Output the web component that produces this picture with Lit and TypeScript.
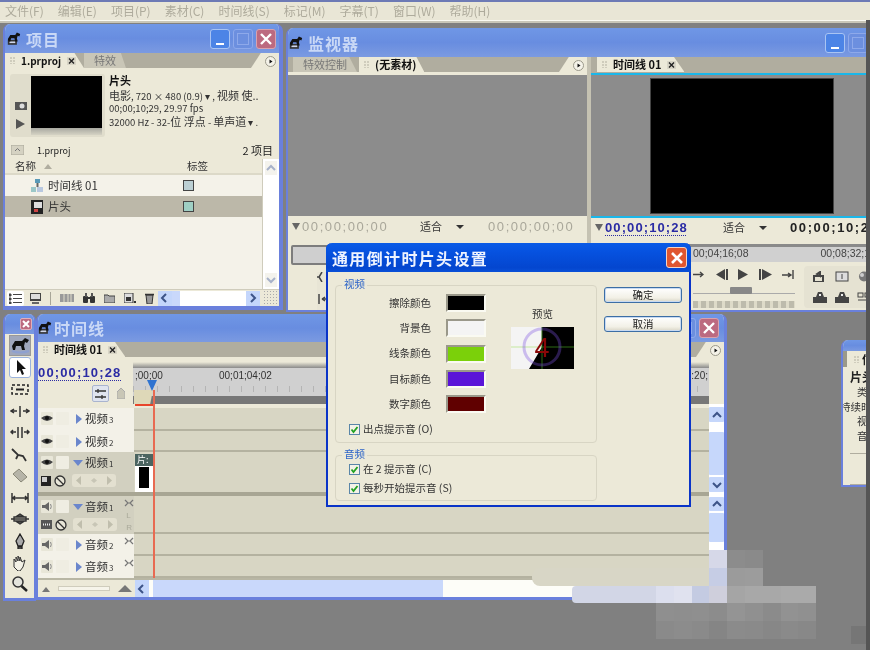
import { LitElement, html, css, svg } from "lit";
import { customElement } from "lit/decorators.js";

const ic = (w: number, h: number, body: unknown) =>
  html`<svg class="ic" width=${w} height=${h} viewBox="0 0 ${w} ${h}">${body}</svg>`;

const horse = () =>
  html`<svg class="ic" width="14" height="14" viewBox="0 0 17 16"><rect x="1" y="9" width="11" height="6" fill="#333"/><rect x="3" y="11" width="7" height="2" fill="#cfd6ea"/>
  <path d="M1 8 L4 3 L10 3 L12 0 L16 2 L15 5 L13 4 L12 7 L13 11 L10 11 L9 7 L5 7 L4 11 L2 11 Z" fill="#111"/></svg>`;

const gridIcon = () => ic(5, 7, svg`<path d="M0 0h2v2H0zM3 0h2v2H3zM0 3h2v2H0zM3 3h2v2H3zM0 6h2v1H0zM3 6h2v1H3z" fill="#cfccbc"/>`);
const tabClose = () => ic(9, 8, svg`<rect width="9" height="8" fill="#d8d5c6"/><path d="M2 1.500 7 6.500M7 1.500 2 6.500" stroke="#222" stroke-width="1.400"/>`);
const menuBtn = () => ic(11, 11, svg`<circle cx="5.500" cy="5.500" r="5" fill="#f4f2e8" stroke="#9a988a"/><path d="M4.500 3.400 7.500 5.500 4.500 7.600Z" fill="#111"/>`);
const chevron = (d: string) => {
  const p: Record<string, string> = { l: "M7 2 3 6 7 10", r: "M4 2 8 6 4 10", u: "M2 8 6 4 10 8", d: "M2 4 6 8 10 4" };
  return ic(12, 12, svg`<path d=${p[d]} fill="none" stroke="#3d5488" stroke-width="2"/>`);
};
const eye = () => ic(12, 8, svg`<path d="M0 3Q6 -2 12 3Q6 9 0 3Z" fill="#444"/><circle cx="6" cy="3" r="2" fill="#111"/>`);
const speaker = () => ic(11, 11, svg`<path d="M0 4h3l4-3v9L3 7H0Z" fill="#666"/><path d="M8.500 3Q10 5.500 8.500 8" fill="none" stroke="#888"/>`);
const sync = () => ic(10, 8, svg`<path d="M1 1 4 4 1 7M9 1 6 4 9 7M4 4h2" fill="none" stroke="#777" stroke-width="1.200"/>`);
const noSign = () => ic(12, 12, svg`<circle cx="6" cy="6" r="5" fill="#e8e6d8" stroke="#333" stroke-width="1.300"/><path d="M2.500 2.500 9.500 9.500" stroke="#333" stroke-width="1.300"/>`);
const kfNav = () => html`<span class="kf">${ic(40, 11, svg`<path d="M7 1 2 5.500 7 10Z" fill="#c0bead"/><path d="M20 3 23 5.500 20 8 17 5.500Z" fill="#c8c6b6"/><path d="M33 1 38 5.500 33 10Z" fill="#c0bead"/>`)}</span>`;

const tools = [
  svg`<path d="M2 8 5 3h7l3-3 4 2-2 3-2-1-1 4 1 4h-3l-1-4H6l-1 4H3Z" fill="#111"/><path d="M2 13q8 3 17 0" stroke="#8ea0d0" stroke-width="2" fill="none"/>`,
  svg`<path d="M7 1v13l3-3 2 5 2-1-2-5h4Z" fill="#111"/>`,
  svg`<path d="M2 4h16v9H2Z" fill="none" stroke="#222" stroke-width="1.500" stroke-dasharray="3 2"/><path d="M6 8.500h8" stroke="#222" stroke-width="2"/>`,
  svg`<path d="M1 8h6M13 8h6M10 3v11M4 6 1 8l3 2M16 6l3 2-3 2" stroke="#333" stroke-width="1.500" fill="none"/>`,
  svg`<path d="M8 3v11M12 3v11M1 8h5M14 8h5M3 6 1 8l2 2M17 6l2 2-2 2" stroke="#333" stroke-width="1.500" fill="none"/>`,
  svg`<path d="M2 3 8 9l5 1 3 5M8 9 6 13" stroke="#333" stroke-width="1.800" fill="none"/>`,
  svg`<path d="M3 6 9 1l8 8-6 5Z" fill="#b6b4a8" stroke="#8a8878"/>`,
  svg`<path d="M2 3v10M18 3v10M3 8h14M5 6 3 8l2 2M15 6l2 2-2 2" stroke="#333" stroke-width="1.500" fill="none"/>`,
  svg`<path d="M10 3 7 5h6ZM10 13l-3-2h6ZM1 8h18M4 6h12v4H4Z" stroke="#333" stroke-width="1.400" fill="none"/>`,
  svg`<path d="M10 1 14 8l-2 5H8L6 8ZM8 14h4v2H8Z" fill="#aaa" stroke="#222" stroke-width="1.300"/>`,
  svg`<path d="M4 8V4l2 3V2l2 4V1l2 5V2l2 5 3-2-2 7-3 4H8L4 12Z" fill="#f3f1e6" stroke="#333"/>`,
  svg`<circle cx="8" cy="6" r="5" fill="#e4e4dc" stroke="#333" stroke-width="1.500"/><path d="M11.500 10 17 15" stroke="#222" stroke-width="2.500"/>`,
];

const menus = ["文件(F)", "编辑(E)", "项目(P)", "素材(C)", "时间线(S)", "标记(M)", "字幕(T)", "窗口(W)", "帮助(H)"];
const swatches = [["擦除颜色", "#000000"], ["背景色", "#f4f4f4"], ["线条颜色", "#7bd00a"], ["目标颜色", "#5a14d8"], ["数字颜色", "#600000"]];

const _ = "";
const blocks = [
  [_, _, _, "#d6d8e8", "#8c8c8c", "#8a8a8a", _, _, _],
  [_, _, _, "#c6cde5", "#9b9b9b", "#9c9c9c", _, _, _],
  ["#dcdfee", "#e0e2ef", "#c4cbe2", "#cfcfdc", "#a5a5a5", "#a8a8a8", "#a8a8a8", "#aaaaaa", "#aaaaaa"],
  ["#8f8f8f", "#8e8e8e", "#8f8f8f", "#8c8c8c", "#949494", "#909090", "#8b8b8b", "#929292", "#909090"],
  ["#8a8a8a", "#8c8c8c", "#8a8a8a", "#858585", "#8b8b8b", "#8a8a8a", "#878787", "#8a8a8a", "#888888"],
];

const tracks = [
  { cls: "h23 light", name: "视频", n: "3", kind: "v" },
  { cls: "h21 light", name: "视频", n: "2", kind: "v" },
  { cls: "h44 dark open sep", name: "视频", n: "1", kind: "v" },
  { cls: "h38 dark open", name: "音频", n: "1", kind: "a" },
  { cls: "h22 light", name: "音频", n: "2", kind: "a" },
  { cls: "h22 light", name: "音频", n: "3", kind: "a" },
];

@customElement("app-root")
export class AppRoot extends LitElement {
  static styles = css`
    :host { display: block; width: 870px; height: 650px; font-family: "Noto Sans CJK SC", "Liberation Sans", sans-serif; }
    * { box-sizing: border-box; }
    .ic { display: block; flex: none; }
    .desk { position: relative; width: 870px; height: 650px; overflow: hidden; background: #808080; filter: blur(0.45px); color: #222; font-size: 10px; line-height: 1; }
    .menubar { height: 21px; background: #e9e6d6; border-top: 2px solid #6d7ab5; border-bottom: 1px solid #fafaf2; display: flex; gap: 14px; padding-left: 5px; align-items: center; color: #aeab9c; font-size: 12px; white-space: nowrap; }
    .menustrip { height: 2px; background: #c8c6b8; }
    .strip { position: absolute; right: 0; top: 20px; bottom: 0; width: 4px; background: #555; z-index: 9; }

    .win { position: absolute; border: 2px solid #6a80dc; border-top: none; border-radius: 7px 7px 0 0; background: #ece9d8; display: flex; flex-direction: column; overflow: hidden; }
    .project { left: 3px; top: 24px; width: 280px; height: 286px; border-right-width: 4px; border-bottom-width: 4px; }
    .monitor { left: 286px; top: 28px; width: 600px; height: 284px; }
    .timeline { left: 36px; top: 314px; width: 691px; height: 286px; border-right-width: 3px; border-bottom-width: 3px; }
    .tools { left: 3px; top: 314px; width: 33px; height: 287px; border-bottom-width: 3px; }
    .info { left: 841px; top: 340px; width: 40px; height: 147px; }

    .title { flex: none; display: flex; align-items: center; gap: 5px; padding: 0 3px 0 2px; background: linear-gradient(#6f97e6, #688de0 50%, #7b9ae1); color: #c9d8f6; font-weight: 700; font-size: 16px; letter-spacing: 1px; }
    .t29 { height: 29px; }
    .t28 { height: 28px; padding-left: 0; gap: 2px; }
    .monitor .title { padding-left: 1px; }
    .spacer { flex: 1; }
    .rs { width: 8px; flex: none; }
    .wb { width: 20px; height: 20px; border-radius: 3px; border: 1px solid #8ea9ea; display: grid; place-items: center; flex: none; }
    .min { background: #4c84e6; border-color: #a9c4f3; align-items: end; padding-bottom: 3px; }
    .min::after { content: ""; width: 8px; height: 2px; background: #fff; }
    .max { background: #6c8fdf; }
    .max::after { content: ""; width: 10px; height: 10px; border: 1px solid #8ea9ea; }
    .close { background: #bc6a80; border-color: #d8a2ae; }
    .wbs { display: flex; gap: 3px; }
    .timeline .wbs { margin-right: 2px; }

    .tabbar { flex: none; height: 18px; background: #b0ad9f; display: flex; align-items: flex-start; border-bottom: 3px solid #ece9d8; position: relative; }
    .tabbar.cy { height: 16px; border-bottom: none; padding-left: 6px; }
    .tab { height: 15px; display: flex; align-items: center; gap: 6px; padding: 0 8px 0 5px; background: #ece9d8; font-weight: 700; font-size: 11px; color: #111; clip-path: polygon(0 0, 88% 0, 100% 100%, 0 100%); white-space: nowrap; }
    .tab .lat { font-size: 10px; }
    .tab.off { background: #c9c6b7; color: #777; font-weight: 400; padding: 0 10px; margin-right: 2px; }
    .tab.first { margin-left: 5px; }
    .tabbar .mb { position: absolute; right: 3px; top: 3px; }
    .tabbar .curve { position: absolute; right: 0; top: 0; width: 28px; height: 15px; background: #ece9d8; clip-path: polygon(0 100%, 35% 0, 100% 0, 100% 100%); }

    .pv { display: flex; padding: 3px 0 0 5px; height: 67px; gap: 4px; }
    .pvl { width: 95px; height: 63px; background: #e0ddcc; display: flex; padding: 2px 3px 2px 0; border-radius: 3px; }
    .pvbtn { width: 21px; display: flex; flex-direction: column; align-items: center; justify-content: flex-end; gap: 9px; padding-bottom: 6px; }
    .pvscreen { flex: 1; display: flex; flex-direction: column; }
    .pvblack { height: 52px; background: #000; }
    .pvseek { flex: 1; background: linear-gradient(#a8a8a0, #d5d3c4); }
    .pvtxt { display: flex; flex-direction: column; padding-top: 1px; font-size: 9.5px; gap: 2.5px; white-space: nowrap; overflow: hidden; color: #333; }
    .pvtxt b { font-size: 11px; color: #111; margin-bottom: 1px; }
    .pvtxt em { font-style: normal; font-size: 11px; }
    .crumb { height: 18px; display: flex; align-items: center; padding: 0 6px 0 6px; justify-content: space-between; font-size: 9px; margin-top: 3px; }
    .crumb .l { display: flex; align-items: center; gap: 13px; }
    .crumb .r { font-size: 11px; }
    .listwrap { flex: 1; display: flex; min-height: 0; }
    .list { flex: 1; background: #f4f2e9; display: flex; flex-direction: column; }
    .lhead { height: 16px; background: #ece9d8; border-bottom: 2px solid #dcd9c8; display: grid; grid-template-columns: 172px 1fr; padding-left: 10px; align-items: center; font-size: 10.5px; color: #333; }
    .lhead span { display: flex; align-items: center; gap: 8px; }
    .lhead i { width: 0; height: 0; border: 4px solid transparent; border-bottom: 5px solid #b0ad9f; border-top: none; }
    .lrow { height: 21px; display: grid; grid-template-columns: 26px 17px 135px 1fr; align-items: center; font-size: 10.5px; color: #333; }
    .lrow.sel { background: #bcb8a9; color: #111; }
    .lrow .nm { grid-column: 3; margin: 0; }
    .lrow .ico { grid-column: 2; }
    .lab { width: 11px; height: 11px; border: 1px solid #444; background: #bcd0d4; }
    .lab.b { background: #9fcfc4; }
    .vscroll { width: 17px; background: #fff; border-left: 1px solid #cfccbc; display: flex; flex-direction: column; justify-content: space-between; padding: 2px; }
    .vscroll .b { height: 14px; background: #e8e6d8; display: grid; place-items: center; opacity: .45; }
    .ptool { height: 17px; flex: none; display: flex; align-items: center; padding-left: 2px; border-top: 1px solid #cfccbc; background: #ece9d8; }
    .ptool .sel { width: 17px; height: 15px; background: #fff; border-radius: 2px; display: grid; place-items: center; }
    .ptool .gap { display: flex; align-items: center; gap: 9px; margin-left: 6px; }
    .vs { width: 1px; height: 13px; background: #a8a698; }
    .hs { flex: 1; display: flex; margin-left: 4px; height: 15px; background: #fff; margin-right: 3px; min-width: 0; }
    .arrow { width: 14px; background: #c4d6fb; display: grid; place-items: center; flex: none; }
    .hs .thumb { width: 8px; background: #c9d8fb; }
    .hs .trk { flex: 1; }
    .grip { width: 15px; flex: none; height: 100%; background: radial-gradient(#aaa 30%, transparent 35%) 0 0 / 3px 3px; margin-right: 1px; }

    .panes { flex: 1; display: grid; grid-template-columns: 299px 4px 295px; min-height: 0; }
    .pane { display: flex; flex-direction: column; min-width: 0; }
    .divider { background: #c5c2b2; }
    .video { flex: none; height: 141px; background: #8c8c8c; }
    .video.r { height: 143px; padding: 3px 0 0 59px; border-top: 2px solid #1ab7ea; }
    .video.r div { width: 184px; height: 136px; background: #000; border: 1px solid #444; }
    .tcbar { flex: none; height: 27px; padding-bottom: 6px; background: #ece9d8; display: flex; align-items: center; font-size: 13px; letter-spacing: 1.600px; font-family: "Liberation Sans", sans-serif; color: #a9a79a; white-space: nowrap; }
    .tcbar.r { border-top: 2px solid #1ab7ea; color: #222; font-weight: 700; padding-bottom: 6px; }
    .tcbar .fit { font-family: "Noto Sans CJK SC", sans-serif; font-size: 11px; color: #333; font-weight: 400; letter-spacing: 0; display: flex; gap: 14px; align-items: center; }
    .tcbar .fit::after { content: ""; border: 4px solid transparent; border-top: 4px solid #333; border-bottom: none; }
    .tcbar .mk { width: 0; height: 0; border: 4px solid transparent; border-top: 7px solid #666; margin: 3px 2px 0 4px; }
    .tcbar .l1 { width: 118px; }
    .tcbar .l2 { width: 68px; }
    .tcbar .bluetc { color: #2a2ba4; width: 118px; text-decoration: underline dotted #2a2ba4 1px; text-underline-offset: 3px; letter-spacing: 1.100px; }
    .tcbar .l3 { width: 67px; }
    .seek { flex: none; height: 20px; margin: 2px 0 0 3px; border: 2px solid #7d7d7d; border-radius: 2px; background: #cfcfcf; }
    .ruler { flex: none; height: 18px; background: #d0d0d0; border-top: 3px solid #8a8a8a; border-left: 2px solid #8a8a8a; margin: 1px 0 0 4px; display: flex; font-size: 10.500px; font-family: "Liberation Sans", sans-serif; color: #444; padding: 1px 0 0 96px; gap: 72px; align-items: flex-start; white-space: nowrap; }
    .ctrl { flex: 1; display: flex; min-height: 0; padding-left: 3px; }
    .ctrl .a { width: 201px; padding-left: 99px; display: flex; flex-direction: column; gap: 4px; padding-top: 7px; }
    .row { display: flex; align-items: center; justify-content: space-between; }
    .ctrl .sl { height: 10px; position: relative; border-bottom: 1px solid #aaa; margin-bottom: 3px; }
    .ctrl .sl::after { content: ""; position: absolute; left: 37px; top: 3px; width: 22px; height: 7px; background: #888; border-radius: 1px; }
    .ctrl .jog { height: 7px; background: repeating-linear-gradient(90deg, #bdbbac 0 5px, #dedbc9 5px 8px); }
    .ctrl .g { flex: 1; margin: 4px 0 3px 9px; background: #e5e2d2; border-radius: 4px; display: grid; grid-template-columns: 22px 22px 22px; gap: 10px 0; padding: 5px 0 0 9px; align-content: start; }
    .ctrl .lg { margin-left: 26px; margin-top: 7px; height: 39px; width: 13px; display: flex; flex-direction: column; gap: 12px; background: #e8e5d5; }

    .tlhead { flex: none; display: flex; height: 44px; }
    .tltc { width: 95px; padding: 2px 0 0 0; display: flex; flex-direction: column; gap: 6px; }
    .tltc b { font-family: "Liberation Sans", sans-serif; font-size: 13px; color: #2a2ba4; letter-spacing: 1.150px; text-decoration: underline dotted #2a2ba4 1px; text-underline-offset: 3px; padding-top: 4px; white-space: nowrap; }
    .tltc div { display: flex; justify-content: flex-end; padding-right: 8px; gap: 8px; align-items: center; }
    .snap { width: 17px; height: 17px; background: #dfe4ef; border: 1px solid #a9b4cf; border-radius: 2px; display: grid; place-items: center; }
    .tlrul { flex: 1; display: flex; flex-direction: column; position: relative; overflow: hidden; margin: 2px 15px 0 0; }
    .rseek { height: 6px; background: linear-gradient(#ece9d8, #8a8a8a); }
    .rtxt { height: 18px; background: #d0d0d0; font-family: "Liberation Sans", sans-serif; font-size: 10px; color: #333; display: flex; align-items: flex-end; padding: 0 1px 5px 2px; white-space: nowrap; justify-content: space-between; }
    .rtxt .m { position: absolute; left: 86px; }
    .rtick { height: 6px; background: repeating-linear-gradient(90deg, #b4b4b4 0 1px, #d0d0d0 1px 12px); }
    .rfill { height: 4px; background: #d0d0d0; }
    .rdark { flex: 1; background: #777; }
    .wa { position: absolute; left: 1px; top: 28px; width: 19px; height: 14px; background: #ded8b8; clip-path: polygon(0 0, 100% 0, 85% 100%, 0 100%); }
    .cti { position: absolute; left: 14px; top: 18px; width: 0; height: 0; border: 5px solid transparent; border-top: 11px solid #2f73d0; border-bottom: none; }
    .tlbody { flex: 1; position: relative; min-height: 0; display: flex; flex-direction: column; }
    .tr { display: grid; grid-template-columns: 96px 575px; flex: none; }
    .h4 { height: 4px; flex: none; }
    .h23 { height: 23px; } .h21 { height: 21px; } .h44 { height: 44px; } .h38 { height: 38px; } .h22 { height: 22px; }
    .th { display: flex; flex-direction: column; gap: 3px; padding: 3px 0 0 3px; position: relative; }
    .light .th { background: #f3f1e8; }
    .dark .th { background: #d2d0c0; }
    .tb { background: #d8d6c4; border-bottom: 2px solid #b4b2a0; }
    .sep .tb, .sep .th { border-bottom: 4px solid #a8a694; }
    .hl { display: flex; align-items: center; gap: 3px; height: 15px; }
    .box { width: 12px; height: 13px; background: #e8e6d8; display: grid; place-items: center; border-radius: 1px; flex: none; }
    .box.w { width: 13px; background: #efede2; margin-right: 4px; }
    .tri { width: 0; height: 0; border: 5px solid transparent; border-left: 6px solid #6a86cc; border-right: none; flex: none; }
    .open .tri { border: 5px solid transparent; border-top: 6px solid #6a86cc; border-bottom: none; margin: 0 -1px 0 -3px; }
    .nm { font-size: 11.500px; color: #333; white-space: nowrap; }
    .nm small { font-size: 8px; margin-left: 1px; }
    .sy { position: absolute; right: 0; top: 3px; }
    .lr { position: absolute; right: 2px; top: 16px; display: flex; flex-direction: column; gap: 4px; font-size: 8px; color: #aaa99a; font-family: "Liberation Sans", sans-serif; }
    .kf { background: #e3e0d0; border-radius: 3px; padding: 1px 2px; margin-left: 3px; }
    .clip { position: absolute; left: 97px; top: 50px; width: 18px; height: 38px; background: #fff; display: flex; flex-direction: column; overflow: hidden; }
    .clip b { height: 12px; background: #4b6460; color: #fff; font-size: 9px; padding: 1px 0 0 2px; font-weight: 400; }
    .clip i { display: block; margin: 1px 4px; flex: none; height: 21px; background: #000; }
    .redbar { position: absolute; left: 97px; top: 0; width: 19px; height: 2px; background: #e8452a; }
    .playhead { position: absolute; left: 115px; top: -14px; bottom: 2px; width: 2px; background: #e86a52; }
    .tail { height: 2px; flex: none; background: #b8b6a4; }
    .vsb { position: absolute; left: 671px; top: 0; bottom: 2px; width: 15px; background: #fff; display: flex; flex-direction: column; padding-top: 3px; gap: 2px; }
    .vsb span { background: #c6d7fb; display: grid; place-items: center; height: 15px; flex: none; border-radius: 1px; }
    .vsb .t1 { height: 43px; margin-top: 8px; }
    .vsb .t2 { height: 29px; }
    .vsb .gapb { margin-top: 3px; height: 14px; }
    .tlbot { flex: none; height: 17px; display: flex; background: #ece9d8; align-items: center; }
    .zs { width: 97px; display: flex; align-items: center; gap: 8px; padding-left: 4px; justify-content: space-between; padding-right: 3px; }
    .zs .line { flex: 1; height: 5px; background: #f6f4ea; border: 1px solid #cfccbc; }
    .hb { flex: 1; height: 100%; display: flex; background: #fdfdf8; gap: 4px; }
    .hb .th2 { width: 290px; background: #c9d8fb; }
    .tlt { height: 20px; justify-content: flex-end; padding: 0 2px; }
    .tclose { width: 12px; height: 12px; background: #bc6a80; border: 1px solid #e0b0bc; border-radius: 2px; display: grid; place-items: center; }
    .toolbox { flex: 1; display: flex; flex-direction: column; align-items: center; padding-top: 1px; justify-content: space-between; padding-bottom: 3px; background: #ece9d8; }
    .tool { width: 22px; height: 21px; display: grid; place-items: center; }
    .tool.on { background: #fff; border: 1px solid #9ab2dc; border-radius: 3px; }
    .tool.top { background: #9fa7bc; border: 1px solid #999; }

    .info .title { height: 11px; }
    .info .body { flex: 1; font-size: 11px; font-weight: 700; white-space: nowrap; display: flex; flex-direction: column; gap: 4px; color: #333; }
    .info .tabh { height: 16px; padding-left: 11px; display: flex; align-items: center; background: linear-gradient(90deg, #9a988a 4px, #ece9d8 4px); color: #111; gap: 3px; }
    .info .b1 { padding-left: 7px; color: #222; font-size: 12px; }
    .info .b2 { margin-left: -1px; font-weight: 400; font-size: 10.500px; padding-left: 15px; }
    .info .b3 { font-weight: 400; font-size: 10.500px; margin-left: -3px; }
    .info hr { width: 100%; border: 0; border-top: 1px solid #b0ad9f; margin: 8px 0 18px 7px; }

    .dialog { position: absolute; left: 326px; top: 243px; width: 365px; height: 264px; background: #ece9d8; border: 2px solid #0a34c8; border-top: none; border-radius: 6px 6px 0 0; z-index: 5; display: flex; flex-direction: column; }
    .dt { flex: none; height: 29px; margin: 0 -2px; border-radius: 6px 6px 0 0; background: linear-gradient(#0a5be6, #0652e0 30%, #0446cf 85%, #0a50d8); color: #eef3ff; font-weight: 700; font-size: 16px; letter-spacing: 1.350px; display: flex; align-items: center; justify-content: space-between; padding: 0 4px 0 6px; white-space: nowrap; }
    .dx { width: 21px; height: 21px; background: #e0562f; border: 1px solid #f4d4c4; border-radius: 3px; display: grid; place-items: center; }
    .db { flex: 1; display: flex; padding: 13px 0 0 7px; min-height: 0; }
    .dl { width: 262px; display: flex; flex-direction: column; gap: 12px; }
    .dr { margin-left: 7px; display: flex; flex-direction: column; gap: 13px; padding-top: 2px; }
    .btn { width: 78px; height: 16px; border: 1px solid #3c6ea5; border-radius: 3px; background: linear-gradient(#fff, #f2f0e6 70%, #d8d5c6); display: grid; place-items: center; font-size: 10.500px; color: #222; box-shadow: inset 0 0 0 1px #c8daf2; }
    .group { position: relative; border: 1px solid #d8d5c4; border-radius: 4px; }
    .group .lg2 { position: absolute; left: 6px; top: -7px; background: #ece9d8; padding: 0 2px; color: #2d64c8; font-size: 10.500px; }
    .gv { height: 158px; padding: 8px 0 0 0; display: flex; flex-wrap: wrap; align-content: flex-start; }
    .ga { height: 46px; padding: 8px 0 0 13px; display: flex; flex-direction: column; gap: 8px; }
    .sw { display: flex; flex-direction: column; gap: 7.300px; width: 150px; }
    .swr { display: flex; height: 18px; align-items: center; justify-content: flex-end; gap: 15px; font-size: 10.500px; color: #333; }
    .swc { width: 40px; height: 18px; border: 2px solid; border-color: #9a988a #fafaf2 #fafaf2 #9a988a; }
    .prev { margin-left: 25px; display: flex; flex-direction: column; align-items: center; gap: 7px; padding-top: 15px; width: 63px; font-size: 10.500px; color: #333; }
    .chk { display: flex; align-items: center; gap: 3px; font-size: 10.500px; color: #333; white-space: nowrap; }
    .chk i { width: 11px; height: 11px; background: #f4f2e8; border: 1px solid #5a86a8; display: grid; place-items: center; flex: none; }
    .chk.out { margin: 11px 0 0 13px; width: 100%; }

    .smudge { position: absolute; z-index: 6; }
    .s1 { left: 532px; top: 568px; width: 178px; height: 18px; background: #d8d6c6; border-radius: 8px 0 0 8px; }
    .s2 { left: 572px; top: 586px; width: 85px; height: 17px; background: #d2d6e6; border-radius: 4px 0 0 4px; }
    .blocks { left: 656px; top: 550px; display: grid; grid-template-columns: repeat(9, 17.8px); grid-auto-rows: 17.8px; }
    .s3 { left: 851px; top: 626px; width: 15px; height: 18px; background: #767676; }
  `;

  xBtn(sz: number) {
    return html`<div class="wb close">${ic(sz, sz, svg`<path d="M1 1 ${sz - 1} ${sz - 1}M${sz - 1} 1 1 ${sz - 1}" stroke="#fff" stroke-width="2.400"/>`)}</div>`;
  }
  wbs() {
    return html`<div class="wbs"><div class="wb min"></div><div class="wb max"></div>${this.xBtn(12)}</div>`;
  }

  project() {
    return html`<section class="win project">
      <div class="title t29">${horse()}<span>项目</span><span class="spacer"></span>${this.wbs()}</div>
      <div class="tabbar">
        <div class="curve"></div><div class="mb">${menuBtn()}</div>
        <div class="tab">${gridIcon()}<span class="lat">1.prproj</span>${tabClose()}</div>
        <div class="tab off">特效</div>
      </div>
      <div class="pv">
        <div class="pvl">
          <div class="pvbtn">
            ${ic(12, 9, svg`<rect y="1" width="12" height="8" fill="#555"/><circle cx="7" cy="5" r="2.500" fill="#ddd"/>`)}
            ${ic(9, 10, svg`<path d="M0 0 9 5 0 10Z" fill="#555"/>`)}
          </div>
          <div class="pvscreen"><div class="pvblack"></div><div class="pvseek"></div></div>
        </div>
        <div class="pvtxt">
          <b>片头</b>
          <span><em>电影</em>, 720 × 480 (0.9) ▾ , <em>视频 使..</em></span>
          <span>00;00;10;29, 29.97 fps</span>
          <span>32000 Hz - 32-<em>位 浮点</em> - <em>单声道</em> ▾ .</span>
        </div>
      </div>
      <div class="crumb">
        <span class="l">${ic(13, 10, svg`<rect width="13" height="10" rx="1" fill="#d5d2c2" stroke="#a8a698"/><path d="M4 6 6.500 3.500 9 6" stroke="#777" fill="none"/>`)}<span>1.prproj</span></span>
        <span class="r">2 项目</span>
      </div>
      <div class="listwrap">
        <div class="list">
          <div class="lhead"><span>名称 <i></i></span><span>标签</span></div>
          <div class="lrow">
            <span class="ico">${ic(13, 14, svg`<rect x="4" width="5" height="4" fill="#5a9ab8"/><rect x="5.500" y="4" width="2" height="4" fill="#666"/><rect y="8" width="5" height="5" fill="#9cc8c8"/><rect x="6" y="8" width="6" height="5" fill="#b8c8e0"/>`)}</span>
            <span class="nm">时间线 01</span><span class="lab"></span>
          </div>
          <div class="lrow sel">
            <span class="ico">${ic(13, 14, svg`<rect width="12" height="14" fill="#222"/><rect x="3" y="2" width="8" height="6" fill="#ddd"/><rect x="3" y="9" width="4" height="3" fill="#c44"/>`)}</span>
            <span class="nm">片头</span><span class="lab b"></span>
          </div>
        </div>
        <div class="vscroll"><span class="b">${chevron("u")}</span><span class="b">${chevron("d")}</span></div>
      </div>
      <div class="ptool">
        <span class="sel">${ic(13, 11, svg`<path d="M0 1h2v2H0zM0 5h2v2H0zM0 9h2v2H0zM4 1.500h9M4 5.500h9M4 9.500h9" stroke="#444" fill="#444"/>`)}</span>
        <span class="gap">
          ${ic(11, 11, svg`<rect width="11" height="8" fill="#444"/><rect x="1" y="1" width="9" height="5" fill="#ddd"/><rect x="2" y="9" width="7" height="2" fill="#666"/>`)}
          <span class="vs"></span>
          ${ic(14, 8, svg`<rect width="14" height="8" fill="#999"/><path d="M4 0v8M8 0v8M11 0v8" stroke="#e0ddcc"/>`)}
          ${ic(12, 10, svg`<rect y="3" width="5" height="7" rx="1" fill="#333"/><rect x="7" y="3" width="5" height="7" rx="1" fill="#333"/><rect x="2" width="2" height="4" fill="#555"/><rect x="8" width="2" height="4" fill="#555"/><rect x="4" y="4" width="4" height="2" fill="#333"/>`)}
          ${ic(11, 9, svg`<path d="M0 1h4l1 1h6v7H0Z" fill="#aaa" stroke="#444"/>`)}
          ${ic(12, 10, svg`<rect width="9" height="10" fill="#ddd" stroke="#333"/><rect x="2" y="4" width="5" height="4" fill="#333"/><rect x="10" y="8" width="2" height="2" fill="#333"/>`)}
          ${ic(9, 11, svg`<path d="M1 2h7l-1 9H2Z" fill="#999" stroke="#333"/><path d="M0 1.500h9" stroke="#333" stroke-width="1.500"/>`)}
        </span>
        <span class="hs">
          <span class="arrow">${chevron("l")}</span><span class="thumb"></span><span class="trk"></span>
          <span class="arrow">${chevron("r")}</span>
        </span>
        <span class="grip"></span>
      </div>
    </section>`;
  }

  monitor() {
    const tp = (b: unknown, w = 14, h = 11) => html`<span>${ic(w, h, b)}</span>`;
    const c = "#444";
    return html`<section class="win monitor">
      <div class="title t29">${horse()}<span>监视器</span><span class="spacer"></span><div class="wbs"><div class="wb min"></div><div class="wb max"></div></div><span class="rs"></span></div>
      <div class="panes">
        <div class="pane">
          <div class="tabbar">
            <div class="curve"></div><div class="mb">${menuBtn()}</div>
            <div class="tab off first">特效控制</div>
            <div class="tab">${gridIcon()}<span>(无素材)</span></div>
          </div>
          <div class="video"></div>
          <div class="tcbar">
            <span class="mk"></span><span class="l1">00;00;00;00</span>
            <span class="fit l2">适合</span><span>00;00;00;00</span>
          </div>
          <div class="seek"></div>
          <div class="ctrl">
            <div class="lg">
              ${ic(7, 10, svg`<path d="M5 0 2 5l3 5M0 5h3" stroke=${c} fill="none" stroke-width="1.500"/>`)}
              ${ic(12, 10, svg`<path d="M2 0v10M5 5h7M5 5l3-2M5 5l3 2" stroke=${c} fill="none" stroke-width="1.500"/>`)}
            </div>
          </div>
        </div>
        <div class="divider"></div>
        <div class="pane">
          <div class="tabbar cy"><div class="tab">${gridIcon()}<span>时间线 01</span>${tabClose()}</div></div>
          <div class="video r"><div></div></div>
          <div class="tcbar r">
            <span class="mk"></span><span class="bluetc">00;00;10;28</span>
            <span class="fit l3">适合</span><span>00;00;10;28</span>
          </div>
          <div class="ruler"><span>00;04;16;08</span><span>00;08;32;16</span></div>
          <div class="ctrl">
            <div class="a">
              <div class="row">
                ${tp(svg`<path d="M0 5.500h10M7 3l3 2.500L7 8" stroke=${c} fill="none" stroke-width="1.400"/>`, 11, 11)}
                ${tp(svg`<path d="M11 0 2 5.500 11 11ZM12 0h2v11h-2Z" fill=${c}/>`)}
                ${tp(svg`<path d="M1 0 11 5.500 1 11Z" fill=${c}/>`, 12)}
                ${tp(svg`<path d="M0 0h2v11H0ZM3 0l10 5.500L3 11Z" fill=${c}/>`)}
                ${tp(svg`<path d="M0 6h9M6 4l3 2-3 2M11 1v9" stroke=${c} fill="none" stroke-width="1.400"/>`, 13, 11)}
              </div>
              <div class="sl"></div>
              <div class="jog"></div>
            </div>
            <div class="g">
              ${tp(svg`<path d="M1 5h9v6H1ZM4 3l3-2v4Z" fill="none" stroke=${c} stroke-width="2"/>`)}
              ${tp(svg`<rect x="1" y="1" width="12" height="9" fill="#ddd" stroke=${c}/><path d="M7 3v5" stroke=${c}/>`)}
              ${tp(svg`<circle cx="7" cy="5.500" r="5" fill="#777"/><circle cx="5" cy="4" r="2" fill="#ccc"/>`)}
              ${tp(svg`<path d="M0 5h14v6H0ZM5 0h4l2 5H3Z" fill=${c}/><rect x="6" y="2" width="2" height="2" fill="#eee"/>`)}
              ${tp(svg`<path d="M0 5h14v6H0ZM5 0h4l2 5H3Z" fill=${c}/><rect x="6" y="2" width="2" height="2" fill="#eee"/>`)}
              ${tp(svg`<rect x="1" y="1" width="5" height="4" fill="none" stroke=${c}/><rect x="8" y="1" width="5" height="4" fill="none" stroke=${c}/><path d="M1 8h11" stroke=${c}/>`)}
            </div>
          </div>
        </div>
      </div>
    </section>`;
  }

  track(t: (typeof tracks)[number]) {
    const open = t.cls.includes("open");
    const icon = t.kind === "v" ? eye() : speaker();
    const sec = t.kind === "v"
      ? ic(10, 10, svg`<rect width="10" height="10" fill="#222"/><rect x="1" y="1" width="5" height="5" fill="#ccc"/>`)
      : ic(11, 9, svg`<rect width="11" height="9" fill="#555"/><path d="M2 4.500h7" stroke="#eee" stroke-width="2" stroke-dasharray="1 1"/>`);
    return html`<div class="tr ${t.cls}">
      <div class="th">
        <div class="hl">
          <span class="box">${icon}</span><span class="box w"></span><span class="tri"></span>
          <span class="nm">${t.name}<small>${t.n}</small></span>
        </div>
        ${open ? html`<div class="hl">${sec}${noSign()}${kfNav()}</div>` : ""}
        ${t.kind === "a" ? html`<span class="sy">${sync()}</span>` : ""}
        ${t.kind === "a" && open ? html`<span class="lr"><span>L</span><span>R</span></span>` : ""}
      </div>
      <div class="tb"></div>
    </div>`;
  }

  timeline() {
    return html`<section class="win timeline">
      <div class="title t28">${horse()}<span>时间线</span><span class="spacer"></span>${this.wbs()}</div>
      <div class="tabbar">
        <div class="curve"></div><div class="mb">${menuBtn()}</div>
        <div class="tab">${gridIcon()}<span>时间线 01</span>${tabClose()}</div>
      </div>
      <div class="tlhead">
        <div class="tltc">
          <b>00;00;10;28</b>
          <div>
            <span class="snap">${ic(13, 12, svg`<path d="M1 3h11M1 9h11M4 1v4M8 7v4" stroke="#333" stroke-width="1.300"/>`)}</span>
            ${ic(8, 11, svg`<path d="M4 0 8 4v7H0V4Z" fill="#c8c6b6" stroke="#aaa"/>`)}
          </div>
        </div>
        <div class="tlrul">
          <div class="rseek"></div>
          <div class="rtxt"><span>;00;00</span><span class="m">00;01;04;02</span><span>:20;</span></div>
          <div class="rtick"></div>
          <div class="rfill"></div>
          <div class="rdark"></div>
          <div class="wa"></div>
          <div class="cti"></div>
        </div>
      </div>
      <div class="tlbody">
        <div class="h4"></div>
        ${tracks.map((t) => this.track(t))}
        <div class="tail"></div>
        <div class="redbar"></div>
        <div class="playhead"></div>
        <div class="clip"><b>片:</b><i></i></div>
        <div class="vsb">
          <span>${chevron("u")}</span><span class="t1"></span><span>${chevron("d")}</span>
          <span class="gapb">${chevron("u")}</span><span class="t2"></span>
        </div>
      </div>
      <div class="tlbot">
        <div class="zs">
          ${ic(8, 6, svg`<path d="M0 6 4 1l4 5Z" fill="#777"/>`)}
          <span class="line"></span>
          ${ic(14, 7, svg`<path d="M0 7 7 0l7 7Z" fill="#777"/>`)}
        </div>
        <div class="hb"><span class="arrow">${chevron("l")}</span><span class="th2"></span></div>
      </div>
    </section>`;
  }

  toolsPanel() {
    return html`<section class="win tools">
      <div class="title tlt"><span class="tclose">${ic(8, 8, svg`<path d="M1 1 7 7M7 1 1 7" stroke="#fff" stroke-width="2"/>`)}</span></div>
      <div class="toolbox">
        ${tools.map((t, i) => html`<span class="tool ${i === 0 ? "top" : i === 1 ? "on" : ""}">${ic(20, 16, t)}</span>`)}
      </div>
    </section>`;
  }

  dialog() {
    const chk = html`<i>${ic(9, 9, svg`<path d="M1.500 4.500 3.500 7 7.500 2" fill="none" stroke="#21a121" stroke-width="1.800"/>`)}</i>`;
    return html`<section class="dialog">
      <div class="dt"><span>通用倒计时片头设置</span><span class="dx">${ic(14, 14, svg`<path d="M2 2 12 12M12 2 2 12" stroke="#fff" stroke-width="2.600"/>`)}</span></div>
      <div class="db">
        <div class="dl">
          <div class="group gv">
            <span class="lg2">视频</span>
            <div class="sw">
              ${swatches.map(([n, c]) => html`<div class="swr"><span>${n}</span><span class="swc" style=${`background:${c}`}></span></div>`)}
            </div>
            <div class="prev">
              <span>预览</span>
              ${ic(63, 42, svg`<rect width="63" height="42" fill="#f4f4f4"/><path d="M31 0H63V42H18L31 20Z" fill="#000"/>
                <path d="M0 20H31" stroke="#c4e8a0"/><path d="M31 20H63M31 0V42" stroke="#2c6a14"/>
                <circle cx="31" cy="20" r="18" fill="none" stroke="#7a4fe0" stroke-opacity=".35" stroke-width="3"/>
                <text x="31" y="30" text-anchor="middle" font-size="27" fill="#8a0808" font-family="Liberation Sans">4</text>`)}
            </div>
            <div class="chk out">${chk}<span>出点提示音 (O)</span></div>
          </div>
          <div class="group ga">
            <span class="lg2">音频</span>
            <div class="chk">${chk}<span>在 2 提示音 (C)</span></div>
            <div class="chk">${chk}<span>每秒开始提示音 (S)</span></div>
          </div>
        </div>
        <div class="dr">
          <div class="btn">确定</div>
          <div class="btn">取消</div>
        </div>
      </div>
    </section>`;
  }

  render() {
    return html`<div class="desk">
      <div class="menubar">${menus.map((m) => html`<span>${m}</span>`)}</div>
      <div class="menustrip"></div>
      ${this.project()}
      ${this.monitor()}
      ${this.toolsPanel()}
      ${this.timeline()}
      <section class="win info">
        <div class="title"></div>
        <div class="body">
          <div class="tabh">${gridIcon()}<span>信息</span></div>
          <span class="b1">片头</span>
          <span class="b2">类型</span>
          <span class="b3">持续时间</span>
          <span class="b2">视频</span>
          <span class="b2">音频</span>
          <hr />
          <hr />
          <span class="b2">光标</span>
        </div>
      </section>
      ${this.dialog()}
      <div class="smudge s1"></div>
      <div class="smudge s2"></div>
      <div class="smudge blocks">${blocks.flat().map((c) => html`<span style=${`background:${c || "transparent"}`}></span>`)}</div>
      <div class="smudge s3"></div>
      <div class="strip"></div>
    </div>`;
  }
}
